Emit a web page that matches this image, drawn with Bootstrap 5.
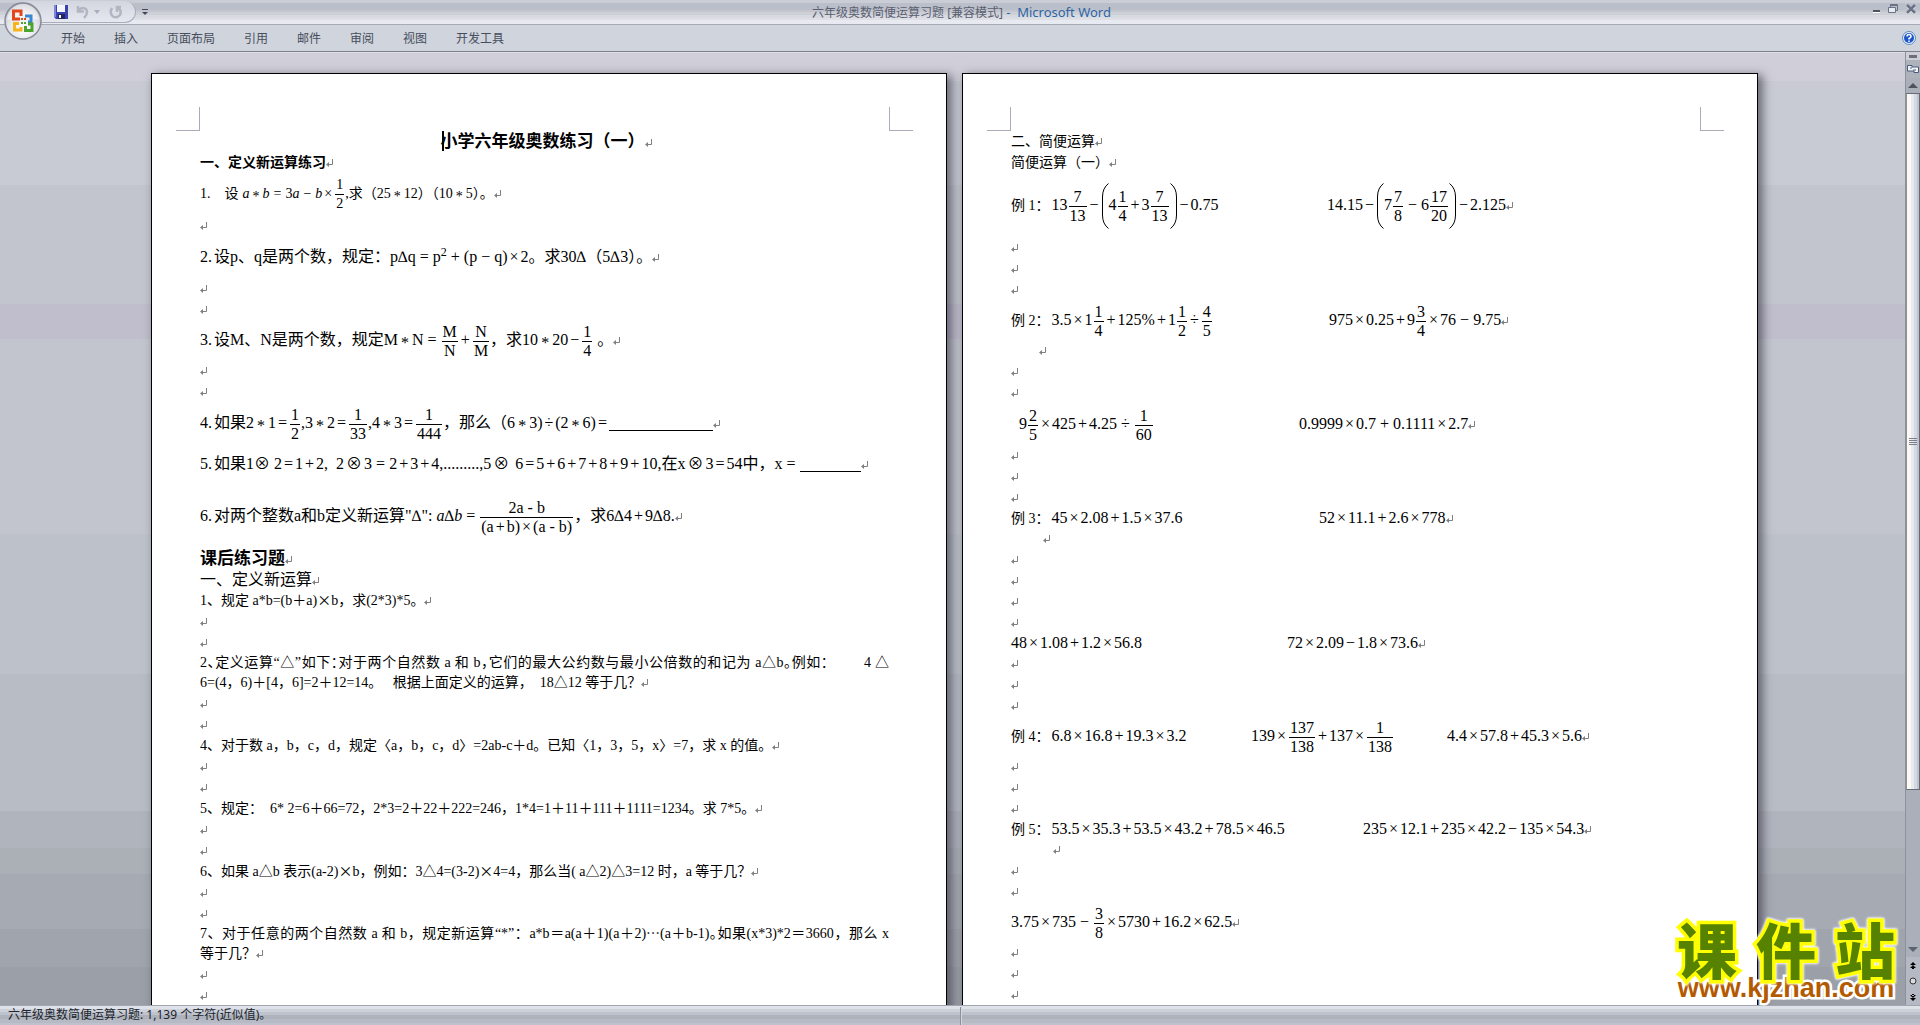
<!DOCTYPE html>
<html lang="zh-CN">
<head>
<meta charset="utf-8">
<meta name="viewport" content="width=device-width, initial-scale=1">
<title>六年级奥数简便运算习题 [兼容模式] - Microsoft Word</title>
<link rel="stylesheet" href="https://cdn.jsdelivr.net/npm/bootstrap@5.3.0/dist/css/bootstrap.min.css">
<style>
body{font-family:"Noto Sans","Noto Sans CJK SC",sans-serif;font-size:12px;color:#3b4250}
p,h1,h2{margin:0}
.titlebar{height:24px;background:linear-gradient(#caccd6 0 3px,#bbbfc9 3px 10px,#c3c5cf 10px 12px,#ced0d8 12px 15px,#d8dae1 15px 18px,#dfe0e6 18px 20px,#e8eaf2 20px);border-bottom:0}
.titletext{font-size:12px;color:#5a6070;padding:2px 0 0 3px}
.titletext a{font-size:13px;color:#2d66a5;text-decoration:none}
.quick{left:20px;top:1px;width:116px;height:22px;padding-left:34px;border-radius:6px 11px 11px 0;background:linear-gradient(#d3d6df,#e6e8f0);border-right:1px solid #a9adba;border-bottom:1px solid #a9adba}
.quickmore{left:142px}
.plainbtn{border:0;background:none;padding:0;line-height:0;display:block;color:inherit}
.orb{left:3px;top:1px}
.ribbon{height:28px;background:#d0d4dd;border-top:1px solid #a7abb8;border-bottom:1px solid #7c808c;padding-left:61px;gap:29px}
.ribbon a{color:#464d5c;text-decoration:none;line-height:28px}
.desk{padding:20px 0 0 4px;gap:15px;border-top:1px solid #dfe1e8;
 background:linear-gradient(#d0ced9 0 28px,#c8cbd4 28px 132px,#c2c5ce 132px 251px,#c0bdcc 251px 286px,#c2c5ce 286px 481px,#bdc2ca 481px 621px,#b8bcc5 621px 758px,#b0b4bd 758px 795px,#abb0b7 795px 821px,#a6aab3 821px 876px,#a0a4ac 876px 914px,#9b9fa7 914px)}
.sheet{flex:0 1 796px;min-width:0;height:1100px;background:#fff;border:1px solid #000;border-bottom:0;padding:57px 57px 0 48px;box-shadow:4px 3px 9px 1px rgba(45,45,60,.6);
 font-family:"Liberation Serif","Noto Sans CJK SC",serif;font-size:14px;color:#000}
.crop{top:33px;width:24px;height:24px;border:0 solid #a9abb6;border-bottom-width:1px}
.crop-l{left:24px;border-right-width:1px}
.crop-r{right:33px;border-left-width:1px}
.ln{line-height:21px;height:21px;white-space:nowrap;font-weight:400}
.ex{line-height:20px;height:20px;font-size:16px}
.two{line-height:20px;height:20px}
.spread{text-align-last:justify}
.eq40,.eq42,.eq64{font-size:16px}
.eq40{line-height:40px;height:40px}
.eq42{line-height:42px;height:42px}
.eq64{line-height:64px;height:64px}
.sz14{font-size:14px}
.sz16{font-size:16px}
.hd{font-size:17px;font-weight:700}
.hs{font-size:14px;font-weight:700}
.ret{width:8px;height:8px;vertical-align:0}
.fr{display:inline-flex;flex-direction:column;vertical-align:middle;text-align:center;line-height:18px;margin:0 1px}
.fr>span{padding:0 1px}
.fr>span:first-child{border-bottom:1px solid #000}
.o{margin:0 2px}
.w{margin:0 4px}
.ast{vertical-align:-3px;margin:0 3px}
.half{font-feature-settings:"halt"}
.cj{font-family:"Noto Sans CJK SC",sans-serif;line-height:1}
.num{margin-right:2px}
.paren{width:8px;height:46px;vertical-align:middle}
.fill1,.fill2{display:inline-block;height:1px;background:#000;vertical-align:-3px}
.fill1{width:104px}.fill2{width:61px}
.lab{font-size:14px;margin-right:2px}
.t196,.t240,.t276,.t288,.t308,.t316,.t318,.t352{display:inline-block}
.t196{width:196px}.t240{width:240px}.t276{width:276px}.t288{width:288px}.t308{width:308px}.t316{width:316px}.t318{width:318px}.t352{width:352px}
.in8{padding-left:8px}.in28{padding-left:28px}.in32{padding-left:32px}.in42{padding-left:42px}
.caret{left:290px;top:57px;width:2px;height:20px;background:#000}
.rail{width:15px;background:#abafb9;border-left:1px solid #8d919b}
.splitbox{height:8px;background:#cfced8}
.railtop{background:#aeb2bc}
.thumb{height:697px;border:1px solid #666b76;border-left-color:#8d919b;background:linear-gradient(90deg,#fdf9ef 0 4px,#e6eaf4 4px 7px,#d5d9e3 7px 10px,#bfc3ce 10px)}
.jump{height:48px;background:#b5b9c3}
.stamp{right:21px;bottom:23px;width:226px;z-index:5}
.stamp-cn{font:900 60px/56px "Noto Sans CJK SC",sans-serif;color:#578200;-webkit-text-stroke:7px #ff0;paint-order:stroke fill;filter:drop-shadow(0 0 1px #fff) drop-shadow(0 0 1px #fff)}
.stamp-url{font:700 27px/28px "Liberation Sans",sans-serif;color:#b35a00;-webkit-text-stroke:5px #fff;paint-order:stroke fill;text-decoration:none;margin-top:-2px}
.status{height:23px;background:linear-gradient(#a2a6b0 0 1px,#dfe2e9 1px 4px,#cdd1da 4px 7px,#bfc3cd 7px 10px,#adb2bb 10px 14px,#b6bac4 14px 18px,#bfc2cd 18px);color:#20242c;padding-left:8px}
.status i{left:50%;top:2px;width:2px;height:20px;background:#d5d8e0;border-left:1px solid #8b8f9a}
</style>
</head>
<body>
<svg width="0" height="0" class="position-absolute" aria-hidden="true">
 <symbol id="r" viewBox="0 0 8 8"><path d="M6.500 0V5.500H2" fill="none" stroke="#808080"/><path d="M0 5.500L3 3V8Z" fill="#808080"/></symbol>
 <symbol id="pl" viewBox="0 0 8 46"><path d="M7.500 .5Q1.500 5 1.500 14V32Q1.500 41 7.500 45.500" fill="none" stroke="#000"/></symbol>
 <symbol id="pr" viewBox="0 0 8 46"><path d="M.5 .5Q6.500 5 6.500 14V32Q6.500 41 .5 45.500" fill="none" stroke="#000"/></symbol>
</svg>
<div class="d-flex flex-column vh-100 overflow-hidden position-relative">
 <header>
  <div class="titlebar d-flex align-items-center justify-content-center position-relative">
   <div class="quick position-absolute d-flex align-items-center">
    <button class="plainbtn" aria-label="保存"><svg width="14" height="14"><path d="M0 0H14V14H2L0 12Z" fill="#3a42b0"/><path d="M3 0H11V7H3Z" fill="#f4f6ff"/><path d="M4 9H11V14H4Z" fill="#22255e"/><path d="M5 10H7V13H5Z" fill="#fff"/><path d="M0 0H2V12H0Z" fill="#7d86d8"/></svg></button>
    <button class="plainbtn ms-2" aria-label="撤消"><svg width="14" height="14"><path d="M2 1V6.500H8M2.500 6C5 2 11 2 11 7Q11 10 8 13" fill="none" stroke="#b2b6c3" stroke-width="2.500"/></svg></button>
    <button class="plainbtn ms-1" aria-label="撤消列表"><svg width="7" height="4"><path d="M0 0H6L3 4Z" fill="#a9adba"/></svg></button>
    <button class="plainbtn ms-2" aria-label="恢复"><svg width="14" height="14"><path d="M3 3Q0 8 4 11.500Q8 13.500 11 10Q13 5 9 3M8 7V2H12" fill="none" stroke="#b2b6c3" stroke-width="2.500"/></svg></button>
   </div>
   <button class="plainbtn quickmore position-absolute" aria-label="自定义快速访问工具栏"><svg width="6" height="7"><path d="M0 .5H6" stroke="#444a57"/><path d="M0 3H6L3 6Z" fill="#444a57"/></svg></button>
   <div class="titletext">六年级奥数简便运算习题 [兼容模式] <a href="#">-&nbsp; Microsoft Word</a></div>
   <div class="position-absolute end-0 top-0 d-flex pe-1 pt-1">
    <button class="plainbtn me-2" aria-label="最小化"><svg width="8" height="10"><path d="M1 6H8V8H1Z" fill="#4d535f"/><path d="M1 8H8V9H1Z" fill="#fff"/></svg></button>
    <button class="plainbtn me-2" aria-label="还原"><svg width="10" height="10"><path d="M2.500 3V.5H9.500V6.500H7.500" fill="none" stroke="#6a7385"/><path d="M.5 3.500H7.500V8.500H.5Z" fill="#e7eaf1" stroke="#6a7385"/><path d="M2 1H9" stroke="#6a7385" stroke-width="2"/></svg></button>
    <button class="plainbtn" aria-label="关闭"><svg width="10" height="10"><path d="M1 2L9 10M9 2L1 10" stroke="#fff" stroke-width="2"/><path d="M1 1L9 9M9 1L1 9" stroke="#6a7385" stroke-width="2.500"/></svg></button>
   </div>
  </div>
  <nav class="ribbon d-flex position-relative">
   <a href="#">开始</a><a href="#">插入</a><a href="#">页面布局</a><a href="#">引用</a><a href="#">邮件</a><a href="#">审阅</a><a href="#">视图</a><a href="#">开发工具</a>
   <button class="plainbtn ms-auto me-1 align-self-center" aria-label="帮助"><svg width="14" height="14"><circle cx="7" cy="7" r="6.500" fill="#e9f0fb" stroke="#5b8cc4"/><circle cx="7" cy="7" r="5" fill="#1d56c8"/><path d="M5 5.500Q5 3.500 7 3.500T9 5.500Q9 6.500 7 7.500V8.500M7 9.500V11" fill="none" stroke="#fff" stroke-width="1.500"/></svg></button>
  </nav>
  <button class="plainbtn orb position-absolute" aria-label="Office 按钮"><svg width="40" height="40" viewBox="0 0 40 40">
   <defs><radialGradient id="og" cx=".5" cy=".7" r=".7"><stop offset="0" stop-color="#fff"/><stop offset=".6" stop-color="#e3e4ea"/><stop offset="1" stop-color="#a9acb8"/></radialGradient></defs>
   <circle cx="20" cy="20" r="18" fill="url(#og)" stroke="#878b98" stroke-width="1.500"/><path d="M4 19A16 16 0 0 1 36 19Q20 14 4 19Z" fill="#fff" opacity=".55"/>
   <g fill="none" stroke-width="3"><path d="M17 18H10.500V10H18V15" stroke="#e0481b"/><path d="M22 15H28V21H25" stroke="#3a86cf"/><path d="M16 22.500H11.500V29H18V26" stroke="#f6b41c"/><path d="M23 29.500H29V23H25M22.500 31V25" stroke="#4ca32e"/></g>
   <path d="M18 17H20V19H18ZM21 17H23V19H21Z" fill="#e0481b"/><path d="M18 21H20V23H18ZM21 21H23V23H21Z" fill="#4ca32e"/></svg></button>
 </header>

 <main class="d-flex flex-grow-1 overflow-hidden position-relative">
  <div class="desk d-flex flex-grow-1 justify-content-center overflow-hidden">
   <article class="sheet position-relative">
    <div class="crop crop-l position-absolute"></div><div class="crop crop-r position-absolute"></div><div class="caret position-absolute"></div>
    <h1 class="ln hd text-center ps-1">小学六年级奥数练习（一）<svg class="ret"><use href="#r"/></svg></h1>
    <h2 class="ln hs">一、定义新运算练习<svg class="ret"><use href="#r"/></svg></h2>
    <p class="ln eq42 sz14">1. &nbsp; &nbsp;设<i class="ms-1">a</i><span class="ast">*</span><i>b</i><span class="w">=</span>3<i>a</i><span class="w">−</span><i>b</i><span class="o">×</span><span class="fr"><span>1</span><span>2</span></span>,求（25<span class="ast">*</span>12）（10<span class="ast">*</span>5）。<svg class="ret"><use href="#r"/></svg></p>
    <p class="ln"><svg class="ret"><use href="#r"/></svg></p>
    <p class="ln eq42"><span class="num">2.</span>设p、q是两个数，规定：p∆q<span class="w">=</span>p<sup>2</sup><span class="w">+</span>(p<span class="w">−</span>q)<span class="o">×</span>2。求30∆（5∆3）。<svg class="ret"><use href="#r"/></svg></p>
    <p class="ln"><svg class="ret"><use href="#r"/></svg></p>
    <p class="ln"><svg class="ret"><use href="#r"/></svg></p>
    <p class="ln eq40"><span class="num">3.</span>设M、N是两个数，规定M<span class="ast">*</span>N<span class="w">=</span><span class="fr"><span>M</span><span>N</span></span><span class="o">+</span><span class="fr"><span>N</span><span>M</span></span>，求10<span class="ast">*</span>20<span class="o">−</span><span class="fr"><span>1</span><span>4</span></span>&nbsp;。<svg class="ret"><use href="#r"/></svg></p>
    <p class="ln"><svg class="ret"><use href="#r"/></svg></p>
    <p class="ln"><svg class="ret"><use href="#r"/></svg></p>
    <p class="ln eq42"><span class="num">4.</span>如果2<span class="ast">*</span>1<span class="o">=</span><span class="fr"><span>1</span><span>2</span></span>,3<span class="ast">*</span>2<span class="o">=</span><span class="fr"><span>1</span><span>33</span></span>,4<span class="ast">*</span>3<span class="o">=</span><span class="fr"><span>1</span><span>444</span></span>，那么（6<span class="ast">*</span>3)<span class="o">÷</span>(2<span class="ast">*</span>6)<span class="o">=</span><span class="fill1"></span><svg class="ret"><use href="#r"/></svg></p>
    <p class="ln eq40"><span class="num">5.</span>如果1⊗ 2<span class="o">=</span>1<span class="o">+</span>2, &nbsp;2<span class="o">⊗</span>3<span class="w">=</span>2<span class="o">+</span>3<span class="o">+</span>4,.........,5<span class="o">⊗</span> 6<span class="o">=</span>5<span class="o">+</span>6<span class="o">+</span>7<span class="o">+</span>8<span class="o">+</span>9<span class="o">+</span>10,在x<span class="o">⊗</span>3<span class="o">=</span>54中，x<span class="w">=</span><span class="fill2"></span><svg class="ret"><use href="#r"/></svg></p>
    <p class="ln eq64"><span class="num">6.</span>对两个整数a和b定义新运算"∆": <i>a</i>∆<i>b</i><span class="w">=</span><span class="fr"><span>2a - b</span><span>(a<span class="o">+</span>b)<span class="o">×</span>(a - b)</span></span>，求6∆4<span class="o">+</span>9∆8.<svg class="ret"><use href="#r"/></svg></p>
    <h2 class="ln hd">课后练习题<svg class="ret"><use href="#r"/></svg></h2>
    <p class="ln sz16">一、定义新运算<svg class="ret"><use href="#r"/></svg></p>
    <p class="ln">1、规定 a*b=(b＋a)<span class="cj">×</span>b，求(2*3)*5。<svg class="ret"><use href="#r"/></svg></p>
    <p class="ln"><svg class="ret"><use href="#r"/></svg></p>
    <p class="ln"><svg class="ret"><use href="#r"/></svg></p>
    <p class="ln two spread">2<span class="half">、</span>定义运算“△”如下<span class="half">：</span>对于两个自然数 a 和 b<span class="half">，</span>它们的最大公约数与最小公倍数的和记为 a△b<span class="half">。</span>例如： &nbsp; &nbsp; &nbsp; 4 △</p>
    <p class="ln two">6=(4，6)＋[4，6]=2＋12=14。 &nbsp; 根据上面定义的运算， &nbsp;18△12 等于几？<svg class="ret"><use href="#r"/></svg></p>
    <p class="ln"><svg class="ret"><use href="#r"/></svg></p>
    <p class="ln"><svg class="ret"><use href="#r"/></svg></p>
    <p class="ln">4、对于数 a，b，c，d，规定〈a，b，c，d〉=2ab-c＋d。已知〈1，3，5，x〉=7，求 x 的值。<svg class="ret"><use href="#r"/></svg></p>
    <p class="ln"><svg class="ret"><use href="#r"/></svg></p>
    <p class="ln"><svg class="ret"><use href="#r"/></svg></p>
    <p class="ln">5、规定： &nbsp;6* 2=6＋66=72，2*3=2＋22＋222=246，1*4=1＋11＋111＋1111=1234。求 7*5。<svg class="ret"><use href="#r"/></svg></p>
    <p class="ln"><svg class="ret"><use href="#r"/></svg></p>
    <p class="ln"><svg class="ret"><use href="#r"/></svg></p>
    <p class="ln">6、如果 a△b 表示(a-2)<span class="cj">×</span>b，例如：3△4=(3-2)<span class="cj">×</span>4=4，那么当( a△2)△3=12 时，a 等于几？<svg class="ret"><use href="#r"/></svg></p>
    <p class="ln"><svg class="ret"><use href="#r"/></svg></p>
    <p class="ln"><svg class="ret"><use href="#r"/></svg></p>
    <p class="ln two spread">7、对于任意的两个自然数 a 和 b，规定新运算“*”：a*b＝a(a＋1)(a＋2)<span class="cj">…</span>(a＋b-1)<span class="half">。</span>如果(x*3)*2＝3660，那么 x</p>
    <p class="ln two">等于几？<svg class="ret"><use href="#r"/></svg></p>
    <p class="ln"><svg class="ret"><use href="#r"/></svg></p>
    <p class="ln"><svg class="ret"><use href="#r"/></svg></p>
   </article>

   <article class="sheet position-relative">
    <div class="crop crop-l position-absolute"></div><div class="crop crop-r position-absolute"></div>
    <p class="ln">二、简便运算<svg class="ret"><use href="#r"/></svg></p>
    <p class="ln">简便运算（一）<svg class="ret"><use href="#r"/></svg></p>
    <p class="ln eq64"><span class="t316"><span class="lab">例 1：</span>13<span class="fr"><span>7</span><span>13</span></span><span class="o">−</span><svg class="paren"><use href="#pl"/></svg>4<span class="fr"><span>1</span><span>4</span></span><span class="o">+</span>3<span class="fr"><span>7</span><span>13</span></span><svg class="paren"><use href="#pr"/></svg><span class="o">−</span>0.75</span>14.15<span class="o">−</span><svg class="paren"><use href="#pl"/></svg>7<span class="fr"><span>7</span><span>8</span></span><span class="w">−</span>6<span class="fr"><span>17</span><span>20</span></span><svg class="paren"><use href="#pr"/></svg><span class="o">−</span>2.125<svg class="ret"><use href="#r"/></svg></p>
    <p class="ln"><svg class="ret"><use href="#r"/></svg></p>
    <p class="ln"><svg class="ret"><use href="#r"/></svg></p>
    <p class="ln"><svg class="ret"><use href="#r"/></svg></p>
    <p class="ln eq40"><span class="t318"><span class="lab">例 2：</span>3.5<span class="o">×</span>1<span class="fr"><span>1</span><span>4</span></span><span class="o">+</span>125%<span class="o">+</span>1<span class="fr"><span>1</span><span>2</span></span><span class="o">÷</span><span class="fr"><span>4</span><span>5</span></span></span>975<span class="o">×</span>0.25<span class="o">+</span>9<span class="fr"><span>3</span><span>4</span></span><span class="o">×</span>76<span class="w">−</span>9.75<svg class="ret"><use href="#r"/></svg></p>
    <p class="ln in28"><svg class="ret"><use href="#r"/></svg></p>
    <p class="ln"><svg class="ret"><use href="#r"/></svg></p>
    <p class="ln"><svg class="ret"><use href="#r"/></svg></p>
    <p class="ln eq42"><span class="t288 in8">9<span class="fr"><span>2</span><span>5</span></span><span class="o">×</span>425<span class="o">+</span>4.25<span class="w">÷</span><span class="fr"><span>1</span><span>60</span></span></span>0.9999<span class="o">×</span>0.7<span class="w">+</span>0.1111<span class="o">×</span>2.7<svg class="ret"><use href="#r"/></svg></p>
    <p class="ln"><svg class="ret"><use href="#r"/></svg></p>
    <p class="ln"><svg class="ret"><use href="#r"/></svg></p>
    <p class="ln"><svg class="ret"><use href="#r"/></svg></p>
    <p class="ln ex"><span class="t308"><span class="lab">例 3：</span>45<span class="o">×</span>2.08<span class="o">+</span>1.5<span class="o">×</span>37.6</span>52<span class="o">×</span>11.1<span class="o">+</span>2.6<span class="o">×</span>778<svg class="ret"><use href="#r"/></svg></p>
    <p class="ln in32"><svg class="ret"><use href="#r"/></svg></p>
    <p class="ln"><svg class="ret"><use href="#r"/></svg></p>
    <p class="ln"><svg class="ret"><use href="#r"/></svg></p>
    <p class="ln"><svg class="ret"><use href="#r"/></svg></p>
    <p class="ln"><svg class="ret"><use href="#r"/></svg></p>
    <p class="ln ex"><span class="t276">48<span class="o">×</span>1.08<span class="o">+</span>1.2<span class="o">×</span>56.8</span>72<span class="o">×</span>2.09<span class="o">−</span>1.8<span class="o">×</span>73.6<svg class="ret"><use href="#r"/></svg></p>
    <p class="ln"><svg class="ret"><use href="#r"/></svg></p>
    <p class="ln"><svg class="ret"><use href="#r"/></svg></p>
    <p class="ln"><svg class="ret"><use href="#r"/></svg></p>
    <p class="ln eq40"><span class="t240"><span class="lab">例 4：</span>6.8<span class="o">×</span>16.8<span class="o">+</span>19.3<span class="o">×</span>3.2</span><span class="t196">139<span class="o">×</span><span class="fr"><span>137</span><span>138</span></span><span class="o">+</span>137<span class="o">×</span><span class="fr"><span>1</span><span>138</span></span></span>4.4<span class="o">×</span>57.8<span class="o">+</span>45.3<span class="o">×</span>5.6<svg class="ret"><use href="#r"/></svg></p>
    <p class="ln"><svg class="ret"><use href="#r"/></svg></p>
    <p class="ln"><svg class="ret"><use href="#r"/></svg></p>
    <p class="ln"><svg class="ret"><use href="#r"/></svg></p>
    <p class="ln ex"><span class="t352"><span class="lab">例 5：</span>53.5<span class="o">×</span>35.3<span class="o">+</span>53.5<span class="o">×</span>43.2<span class="o">+</span>78.5<span class="o">×</span>46.5</span>235<span class="o">×</span>12.1<span class="o">+</span>235<span class="o">×</span>42.2<span class="o">−</span>135<span class="o">×</span>54.3<svg class="ret"><use href="#r"/></svg></p>
    <p class="ln in42"><svg class="ret"><use href="#r"/></svg></p>
    <p class="ln"><svg class="ret"><use href="#r"/></svg></p>
    <p class="ln"><svg class="ret"><use href="#r"/></svg></p>
    <p class="ln eq40">3.75<span class="o">×</span>735<span class="w">−</span><span class="fr"><span>3</span><span>8</span></span><span class="o">×</span>5730<span class="o">+</span>16.2<span class="o">×</span>62.5<svg class="ret"><use href="#r"/></svg></p>
    <p class="ln"><svg class="ret"><use href="#r"/></svg></p>
    <p class="ln"><svg class="ret"><use href="#r"/></svg></p>
    <p class="ln"><svg class="ret"><use href="#r"/></svg></p>
   </article>
  </div>

  <aside class="rail d-flex flex-column flex-shrink-0">
   <div class="splitbox d-flex align-items-center justify-content-center"><svg width="8" height="3"><path d="M0 0H8V3H0Z" fill="#6c707a"/></svg></div>
   <button class="plainbtn railtop w-100 py-1" aria-label="标尺"><svg width="12" height="10"><path d="M.5 1.500H5V3H11.500V8.500H7V7H.5Z" fill="#f3f4fb" stroke="#4a5a78"/><path d="M3 4H5M6 6H9" stroke="#4a5a78"/></svg></button>
   <button class="plainbtn w-100 py-1" aria-label="向上滚动"><svg width="10" height="7"><path d="M0 6L5 1L10 6Z" fill="#4c525e"/></svg></button>
   <div class="thumb d-flex align-items-center justify-content-center"><svg width="8" height="8"><path d="M0 .5H8M0 2.500H8M0 4.500H8M0 6.500H8" stroke="#7b808c"/></svg></div>
   <button class="plainbtn w-100 mt-auto py-1" aria-label="向下滚动"><svg width="10" height="7"><path d="M0 1L5 6L10 1Z" fill="#5c6472"/></svg></button>
   <div class="jump d-flex flex-column justify-content-around align-items-center">
    <button class="plainbtn" aria-label="前一页"><svg width="6" height="7"><path d="M0 3L3 0L6 3ZM0 6L3 3L6 6ZM2 5H4V7H2Z" fill="#000"/></svg></button>
    <button class="plainbtn" aria-label="选择浏览对象"><svg width="8" height="8"><circle cx="4" cy="4" r="3" fill="#d8dae0" stroke="#333"/></svg></button>
    <button class="plainbtn" aria-label="下一页"><svg width="6" height="7"><path d="M0 1L3 4L6 1ZM0 4L3 7L6 4ZM2 0H4V2H2Z" fill="#000"/></svg></button>
   </div>
  </aside>
 </main>
 <div class="stamp position-absolute">
  <div class="stamp-cn d-flex justify-content-between px-1"><span>课</span><span>件</span><span>站</span></div>
  <a class="stamp-url d-block text-center" href="#">www.kjzhan.com</a>
 </div>
 <footer class="status position-relative d-flex align-items-center"><span>六年级奥数简便运算习题: 1,139 个字符(近似值)。</span><i class="position-absolute"></i></footer>
</div>
<script src="https://cdn.jsdelivr.net/npm/bootstrap@5.3.0/dist/js/bootstrap.bundle.min.js"></script>
</body>
</html>
